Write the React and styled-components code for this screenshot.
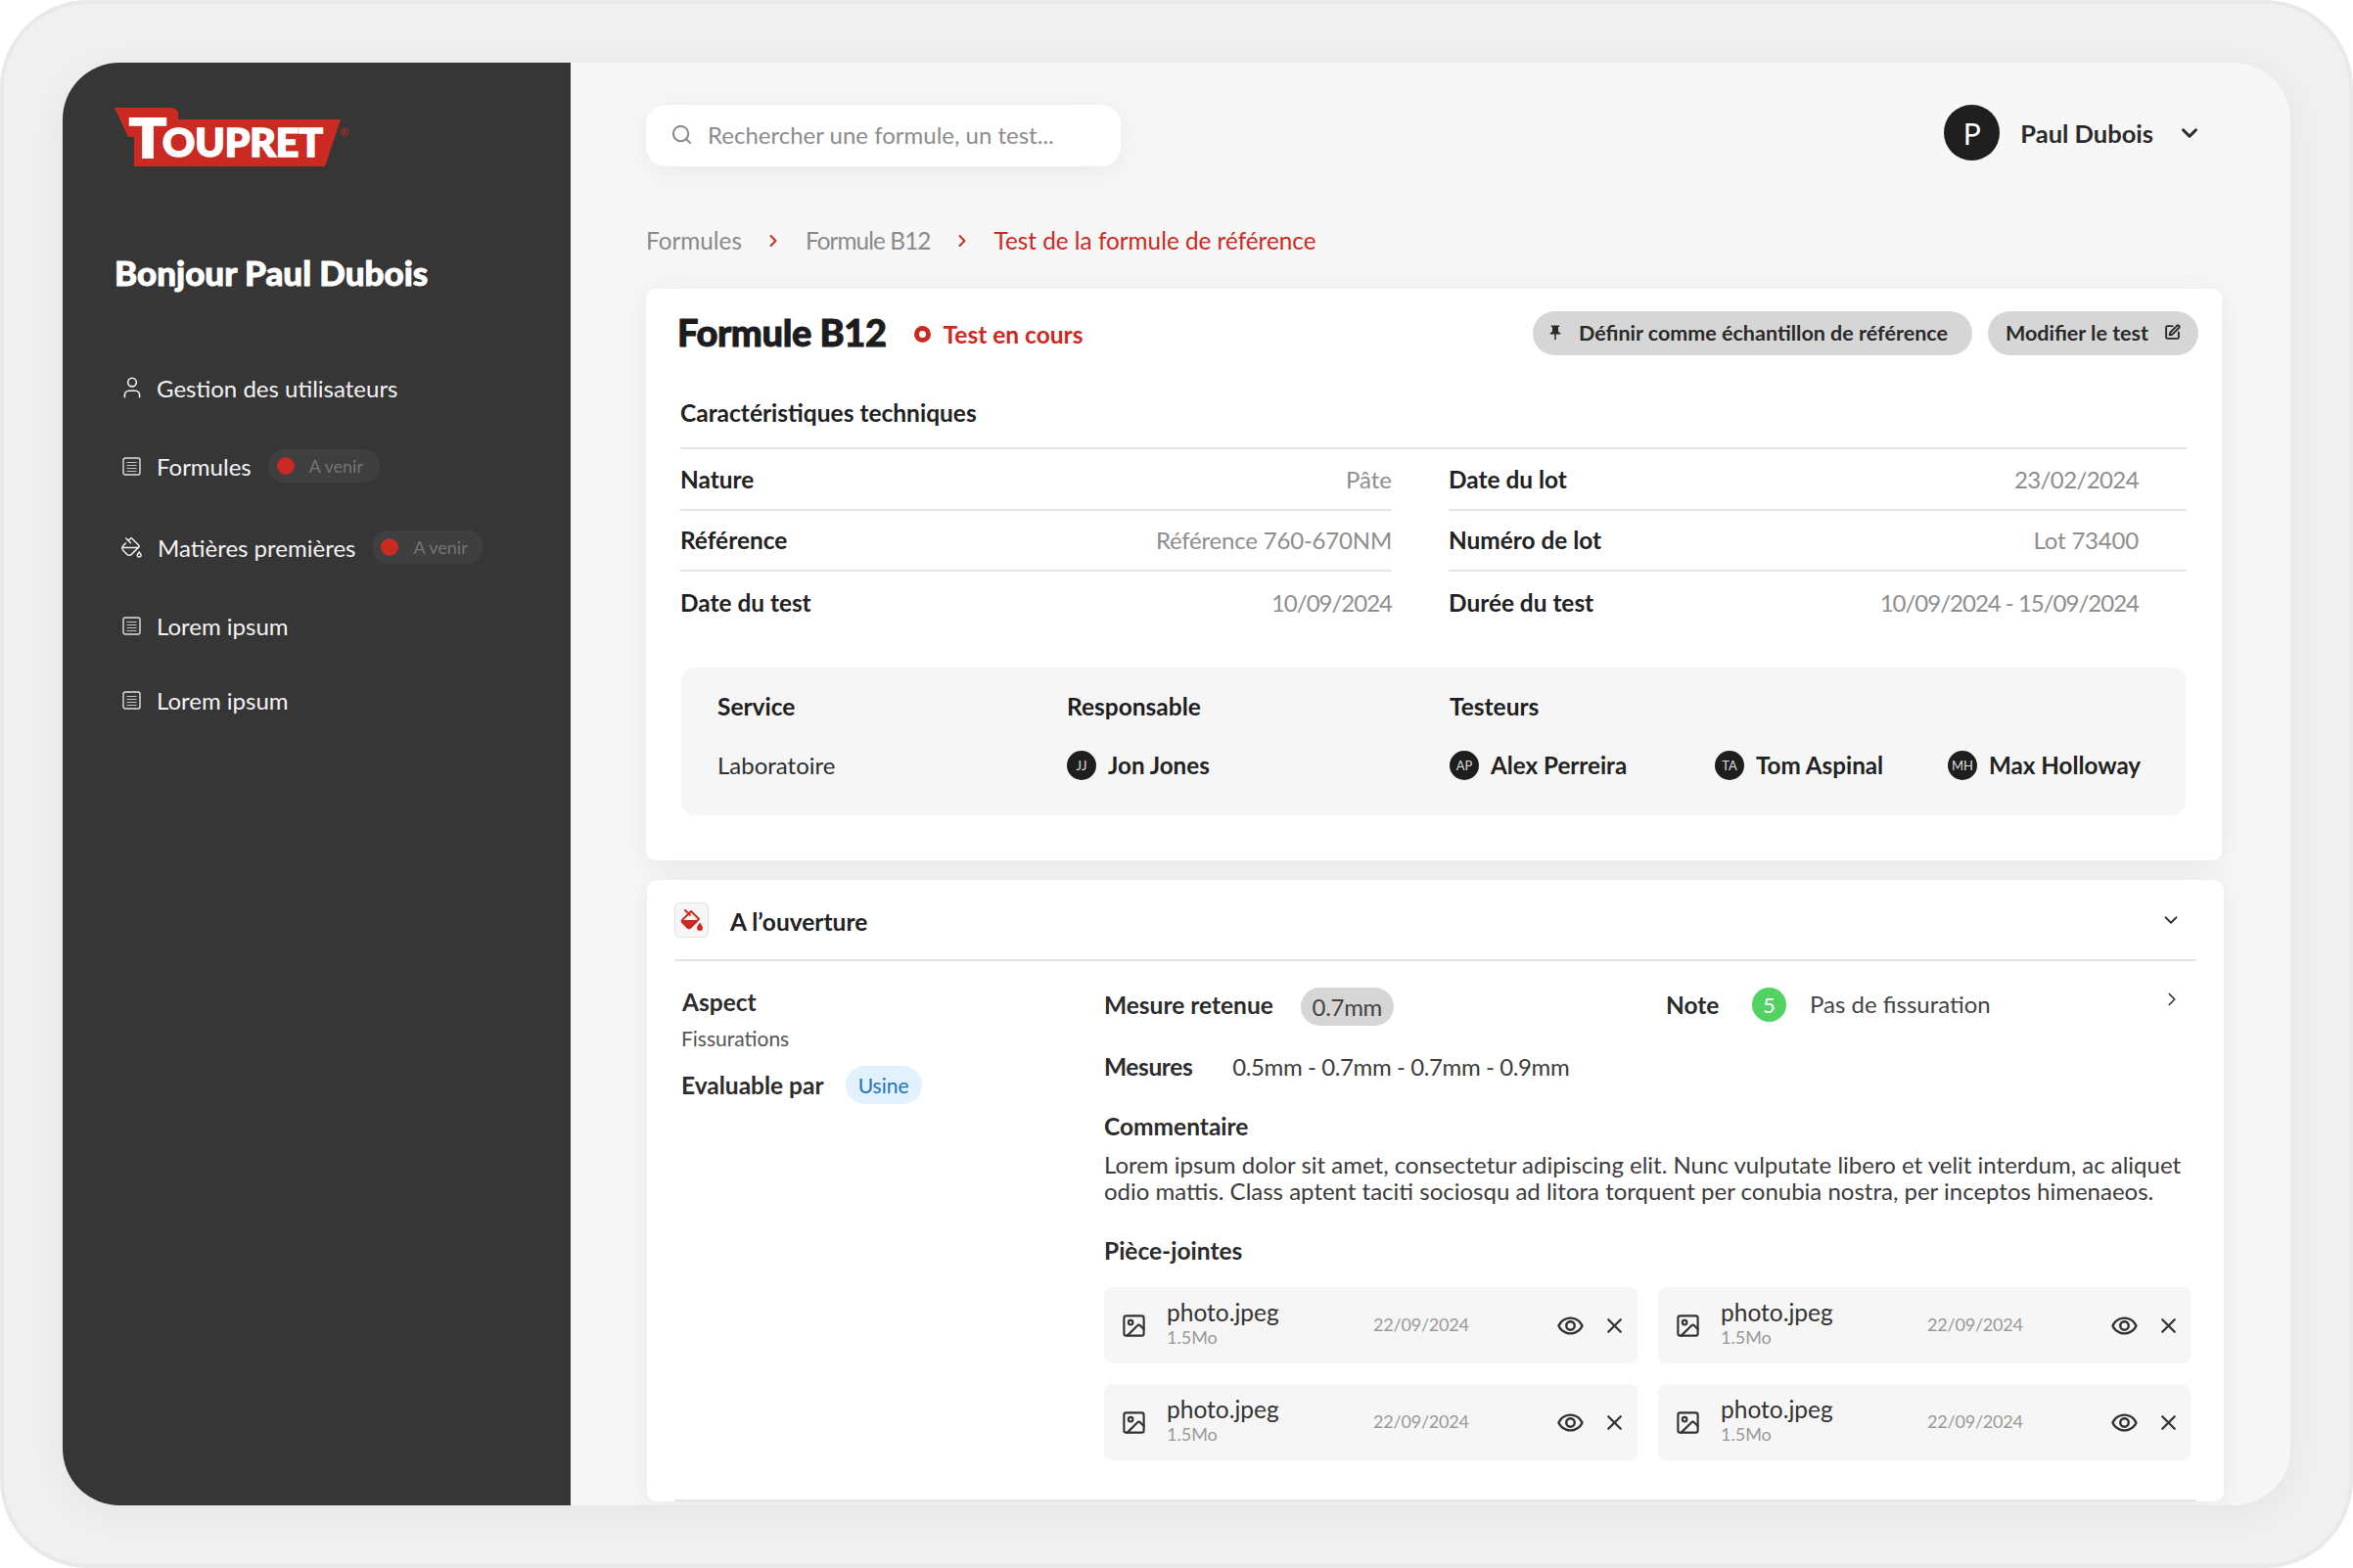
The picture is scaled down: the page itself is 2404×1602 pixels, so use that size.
import React from 'react';
import styled, { createGlobalStyle } from 'styled-components';
import { ChevronDown, ChevronRight, Image as ImageIcon, PaintBucket, Search, SquarePen, User, X } from 'lucide-react';
import { MdOutlineRemoveRedEye, MdPushPin } from 'react-icons/md';

const RED = '#cb2a23';
const FONT = '"Lato", "Open Sans", sans-serif';

const GlobalStyle = createGlobalStyle`
  html, body { margin: 0; padding: 0; background: #fff; }
  body { font-family: ${FONT}; color: #2e2e2e; }
  * { box-sizing: border-box; }
`;

const Device = styled.div`
  width: 2404px;
  height: 1602px;
  padding: 60px;
  padding-right: 60px;
  background: #f0f0f0;
  border: 4px solid #e9e9e9;
  border-radius: 90px;
`;

const Screen = styled.div`
  display: flex;
  height: 1474px;
  width: 2276px;
  overflow: hidden;
  border-radius: 58px;
  background: #f7f7f7;
  box-shadow: 0 8px 40px rgba(0, 0, 0, 0.05);
`;

const Sidebar = styled.aside`
  flex: 0 0 519px;
  background: #363636;
  padding: 46px 0 0 53px;
  color: #f2f2f2;
`;

const LogoMark = styled.svg`
  display: block;
  overflow: visible;
`;

const Greeting = styled.h1`
  margin: 86px 0 81px;
  font-size: 35px;
  line-height: 40px;
  font-weight: 900;
  color: #fff;
  -webkit-text-stroke: 0.9px #fff;
`;

const NavItem = styled.div`
  display: flex;
  align-items: center;
  height: 34px;
  margin-top: ${(p) => p.$top || 0}px;
  margin-left: ${(p) => p.$indent || 8}px;
  font-size: 24px;
  svg { flex: none; }
`;

const NavLabel = styled.span`
  margin-left: ${(p) => p.$gap}px;
  margin-right: 17px;
`;

const SoonPill = styled.span`
  display: flex;
  align-items: center;
  width: 114px;
  height: 34px;
  padding-left: 9px;
  border-radius: 17px;
  background: #3f3f3f;
  color: #747474;
  font-size: 18px;
  &::before {
    content: '';
    width: 18px;
    height: 18px;
    margin-right: 15px;
    border-radius: 50%;
    background: ${RED};
  }
`;

const Main = styled.main`
  flex: 1;
  min-width: 0;
  padding: 43px 68px 0 77px;
`;

const TopBar = styled.header`
  display: flex;
  align-items: center;
  justify-content: space-between;
  height: 63px;
  padding-right: 22px;
`;

const SearchBox = styled.div`
  display: flex;
  align-items: center;
  gap: 15px;
  width: 485px;
  height: 63px;
  padding: 0 0 2px 25px;
  border-radius: 20px;
  background: #fff;
  box-shadow: 0 6px 30px rgba(0, 0, 0, 0.06);
  color: #8c8c8c;
  font-size: 24px;
`;

const UserMenu = styled.div`
  display: flex;
  align-items: center;
  margin-top: -6px;
  font-size: 25.5px;
  font-weight: 700;
  color: #2b2b2b;
`;

const UserAvatar = styled.div`
  display: flex;
  align-items: center;
  justify-content: center;
  width: 57px;
  height: 57px;
  margin-right: 21px;
  border-radius: 50%;
  background: #1e1e1e;
  color: #fff;
  font-size: 30px;
  font-weight: 400;
`;

const Crumbs = styled.nav`
  display: flex;
  align-items: center;
  height: 30px;
  margin: 60px 0 35px;
  font-size: 24.3px;
  color: #8a8a8a;
`;

const Crumb = styled.span`
  letter-spacing: ${(p) => p.$tight || 0}px;
  color: ${(p) => (p.$active ? RED : 'inherit')};
`;

const CrumbArrow = styled(ChevronRight)`
  margin: 2px 23px 0 22px;
  color: ${RED};
`;

const Card = styled.section`
  width: ${(p) => p.$width}px;
  margin-left: ${(p) => p.$left || 0}px;
  background: #fff;
  border-radius: 10px;
  box-shadow: 0 4px 30px rgba(0, 0, 0, 0.07);
`;

const SummaryCard = styled(Card)`
  height: 584px;
  padding: 23px 24px 0 32px;
  margin-bottom: 20px;
`;

const TitleRow = styled.div`
  display: flex;
  align-items: center;
  height: 45px;
`;

const Title = styled.h2`
  margin: -3px 28px 0 0;
  font-size: 38px;
  letter-spacing: -0.4px;
  font-weight: 900;
  color: #1c1c1c;
  -webkit-text-stroke: 0.9px #1c1c1c;
`;

const Status = styled.span`
  display: flex;
  align-items: center;
  flex: 1;
  margin-top: 1px;
  font-size: 24.5px;
  font-weight: 700;
  color: ${RED};
  &::before {
    content: '';
    width: 7px;
    height: 7px;
    margin-right: 13px;
    border: 5px solid ${RED};
    border-radius: 50%;
  }
`;

const PillButton = styled.button`
  display: flex;
  align-items: center;
  height: 45px;
  margin-left: 16px;
  padding: ${(p) => p.$padding};
  padding-bottom: 2px;
  border: 0;
  border-radius: 23px;
  background: #d6d6d6;
  color: #2a2a2a;
  font-family: inherit;
  font-size: 21.5px;
  font-weight: 700;
`;

const SectionTitle = styled.h3`
  margin: 44px 0 20px 3px;
  height: 30px;
  font-size: 24.5px;
  line-height: 30px;
  font-weight: 700;
  color: #222;
`;

const SpecGrid = styled.div`
  display: grid;
  grid-template-columns: 727px 754px;
  column-gap: 58px;
  width: 1539px;
  margin-left: 3px;
  border-top: 2px solid #e4e4e4;
`;

const SpecRow = styled.div`
  display: flex;
  align-items: center;
  justify-content: space-between;
  height: 62.5px;
  padding-right: ${(p) => p.$pad || 0}px;
  font-size: 24.4px;
  border-bottom: ${(p) => (p.$last ? 'none' : '2px solid #e6e6e6')};
`;

const SpecLabel = styled.span`
  font-weight: 700;
  color: #222;
`;

const SpecValue = styled.span`
  font-size: 24px;
  letter-spacing: ${(p) => p.$tight || 0}px;
  color: #8e8e8e;
`;

const PeopleBox = styled.div`
  display: grid;
  grid-template-columns: 357px 391px 1fr;
  grid-template-rows: 60px 60px;
  align-items: center;
  width: 1537px;
  height: 151px;
  margin: 35px 0 0 4px;
  padding: 10px 0 0 37px;
  border-radius: 14px;
  background: #f6f6f6;
  font-size: 24px;
`;

const PeopleHead = styled.span`
  font-size: 24.5px;
  font-weight: 700;
  color: #1e1e1e;
`;

const Person = styled.span`
  display: flex;
  align-items: center;
  gap: 12px;
  width: ${(p) => p.$width || 'auto'};
  flex: none;
  font-size: 24.2px;
  font-weight: 700;
  color: #222;
`;

const Initials = styled.span`
  display: flex;
  align-items: center;
  justify-content: center;
  width: 30px;
  height: 30px;
  border-radius: 50%;
  background: #1e1e1e;
  color: #ddd;
  font-size: 13px;
  font-weight: 400;
`;

const Testers = styled.div`
  display: flex;
`;

const DetailCard = styled(Card)`
  padding: 0 28px;
`;

const DetailHeader = styled.div`
  display: flex;
  align-items: center;
  height: 83px;
  border-bottom: 2px solid #e4e4e4;
  font-size: 24.5px;
  font-weight: 700;
  color: #222;
`;

const IconTile = styled.span`
  display: flex;
  align-items: center;
  justify-content: center;
  width: 35px;
  height: 36px;
  margin-right: 22px;
  border: 1px solid #e3e3e3;
  border-radius: 5px;
  background: #f6f6f6;
  color: ${RED};
`;

const DetailTitle = styled.span`
  flex: 1;
  padding-top: 3px;
`;

const DetailBody = styled.div`
  display: grid;
  grid-template-columns: 439px 1110px;
  padding: 27px 0 40px;
  border-bottom: 2px solid #e4e4e4;
`;

const AspectColumn = styled.div`
  padding-left: 8px;
`;

const Strong = styled.div`
  font-size: 24.5px;
  line-height: 30px;
  font-weight: 700;
  color: #2c2c2c;
`;

const Small = styled.div`
  margin: 9px 0 0 -1px;
  font-size: 21px;
  line-height: 26px;
  color: #555;
`;

const EvalRow = styled.div`
  display: flex;
  align-items: center;
  gap: 22px;
  margin: 15px 0 0 -1px;
`;

const UsinePill = styled.span`
  display: flex;
  align-items: center;
  justify-content: center;
  width: 78px;
  height: 39px;
  border-radius: 20px;
  background: #e1f1fd;
  color: #1b75b8;
  font-size: 21px;
`;

const MeasureRow = styled.div`
  display: flex;
  align-items: center;
  height: 39px;
  font-size: 24px;
`;

const MeasureBlock = styled.div`
  display: flex;
  align-items: center;
  gap: 28px;
  width: 574px;
`;

const MeasureLabel = styled(Strong)`
  margin-top: -3px;
`;

const ValuePill = styled.span`
  display: flex;
  align-items: center;
  justify-content: center;
  width: 95px;
  height: 39px;
  border-radius: 20px;
  background: #d6d6d6;
  letter-spacing: -0.3px;
  color: #444;
`;

const NoteLabel = styled(Strong)`
  width: 88px;
  margin-top: -4px;
`;

const NoteDot = styled.span`
  display: flex;
  align-items: center;
  justify-content: center;
  width: 35px;
  height: 35px;
  margin: -4px 24px 0 0;
  border-radius: 50%;
  background: #51d263;
  color: #fff;
  font-size: 22px;
`;

const NoteText = styled.span`
  flex: 1;
  margin-top: -6px;
  color: #444;
`;

const NoteChevron = styled(ChevronRight)`
  margin: -16px 8px 0 0;
  color: #333;
`;

const MeasuresLine = styled.div`
  display: flex;
  gap: 41px;
  margin-top: 27px;
  font-size: 24px;
  line-height: 30px;
  letter-spacing: -0.4px;
  color: #3c3c3c;
`;

const SubHead = styled(Strong)`
  margin-top: ${(p) => p.$top}px;
`;

const Comment = styled.p`
  margin: 10px 0 0;
  font-size: 24px;
  line-height: 27px;
  color: #3c3c3c;
`;

const Files = styled.div`
  display: grid;
  grid-template-columns: 545px 544px;
  grid-auto-rows: 78px;
  gap: 21px;
  margin-top: 22px;
`;

const FileRow = styled.div`
  display: grid;
  grid-template-columns: 64px 211px 187px 47px 30px;
  align-items: center;
  border-radius: 8px;
  background: #f6f6f6;
  color: #333;
`;

const FileIcon = styled.span`
  display: flex;
  justify-content: center;
  padding-right: 3px;
`;

const FileName = styled.div`
  margin-top: -4px;
  font-size: 24.5px;
  line-height: 26px;
`;

const FileSize = styled.div`
  margin-top: 1px;
  font-size: 18px;
  line-height: 22px;
  color: #999;
`;

const FileDate = styled.span`
  margin-top: -2px;
  font-size: 18px;
  letter-spacing: -0.2px;
  color: #999;
`;

const Logo = () => (
  <LogoMark width="240" height="62" viewBox="0 0 240 62">
    <path fill={RED} d="M0 0H55Q62 0 65 4V12H231L215 60H20V30H14Z" />
    <text x="15" y="51" fill="#fff" stroke="#fff" strokeWidth="2" fontFamily="Lato" fontWeight="900" fontSize="56" textLength="38" lengthAdjust="spacingAndGlyphs">T</text>
    <text x="49" y="49.5" fill="#fff" stroke="#fff" strokeWidth="1.6" fontFamily="Lato" fontWeight="900" fontSize="39" textLength="164" lengthAdjust="spacingAndGlyphs">OUPRET</text>
    <text x="230" y="29" fill={RED} fontFamily="Lato" fontSize="12">®</text>
  </LogoMark>
);

const DocIcon = () => (
  <svg width="19" height="19" viewBox="0 0 19 19" fill="none" stroke="currentColor" strokeWidth="1.2" strokeOpacity="0.9">
    <rect x="1" y="1" width="17" height="17" rx="2" strokeWidth="1.4" />
    <path d="M4.5 5.5h10M4.5 8.5h10M4.5 11.5h10M4.5 14.5h10" strokeOpacity="0.75" />
  </svg>
);

const FilledBucket = () => (
  <svg width="24" height="26" viewBox="0 0 24 24" fill="none" stroke={RED} strokeWidth="2" strokeLinecap="round" strokeLinejoin="round">
    <path d="m19 11-8-8-8.6 8.6a2 2 0 0 0 0 2.8l5.2 5.2c.8.8 2 .8 2.8 0L19 11Z" />
    <path d="m5 2 5 5" />
    <path d="M2.4 13H17l-6.6 6.6c-.8.8-2 .8-2.8 0l-5.2-5.2Z" fill={RED} />
    <path d="M22 20a2 2 0 1 1-4 0c0-1.6 1.7-2.4 2-4 .3 1.6 2 2.4 2 4Z" fill={RED} />
  </svg>
);

const attachments = [0, 1, 2, 3];

export default function App() {
  return (
    <>
      <GlobalStyle />
      <Device>
        <Screen>
          <Sidebar>
            <Logo />
            <Greeting>Bonjour Paul Dubois</Greeting>
            <NavItem $indent={5}>
              <User size={26} strokeWidth={1.5} />
              <NavLabel $gap={12}>Gestion des utilisateurs</NavLabel>
            </NavItem>
            <NavItem $top={46}>
              <DocIcon />
              <NavLabel $gap={16}>Formules</NavLabel>
              <SoonPill>A venir</SoonPill>
            </NavItem>
            <NavItem $top={49} $indent={6}>
              <PaintBucket size={23} strokeWidth={1.5} />
              <NavLabel $gap={15}>Matières premières</NavLabel>
              <SoonPill>A venir</SoonPill>
            </NavItem>
            <NavItem $top={46}>
              <DocIcon />
              <NavLabel $gap={16}>Lorem ipsum</NavLabel>
            </NavItem>
            <NavItem $top={42}>
              <DocIcon />
              <NavLabel $gap={16}>Lorem ipsum</NavLabel>
            </NavItem>
          </Sidebar>
          <Main>
            <TopBar>
              <SearchBox>
                <Search size={23} strokeWidth={2.2} />
                Rechercher une formule, un test...
              </SearchBox>
              <UserMenu>
                <UserAvatar>P</UserAvatar>
                Paul Dubois
                <ChevronDown size={26} strokeWidth={2.8} style={{ marginLeft: 24 }} />
              </UserMenu>
            </TopBar>
            <Crumbs>
              <Crumb>Formules</Crumb>
              <CrumbArrow size={20} strokeWidth={2.4} />
              <Crumb $tight={-0.9}>Formule B12</Crumb>
              <CrumbArrow size={20} strokeWidth={2.4} />
              <Crumb $active>Test de la formule de référence</Crumb>
            </Crumbs>
            <SummaryCard $width={1610}>
              <TitleRow>
                <Title>Formule B12</Title>
                <Status>Test en cours</Status>
                <PillButton $padding="0 25px 0 14px">
                  <MdPushPin size={18} style={{ marginRight: 15 }} />
                  Définir comme échantillon de référence
                </PillButton>
                <PillButton $padding="0 18px">
                  Modifier le test
                  <SquarePen size={17} strokeWidth={2.7} style={{ marginLeft: 16 }} />
                </PillButton>
              </TitleRow>
              <SectionTitle>Caractéristiques techniques</SectionTitle>
              <SpecGrid>
                <div>
                  <SpecRow><SpecLabel>Nature</SpecLabel><SpecValue>Pâte</SpecValue></SpecRow>
                  <SpecRow><SpecLabel>Référence</SpecLabel><SpecValue $tight={-0.2}>Référence 760-670NM</SpecValue></SpecRow>
                  <SpecRow $last><SpecLabel>Date du test</SpecLabel><SpecValue $tight={-1}>10/09/2024</SpecValue></SpecRow>
                </div>
                <div>
                  <SpecRow $pad={49}><SpecLabel>Date du lot</SpecLabel><SpecValue $tight={-0.6}>23/02/2024</SpecValue></SpecRow>
                  <SpecRow $pad={49}><SpecLabel>Numéro de lot</SpecLabel><SpecValue $tight={-0.2}>Lot 73400</SpecValue></SpecRow>
                  <SpecRow $pad={49} $last><SpecLabel>Durée du test</SpecLabel><SpecValue $tight={-1}>10/09/2024 - 15/09/2024</SpecValue></SpecRow>
                </div>
              </SpecGrid>
              <PeopleBox>
                <PeopleHead>Service</PeopleHead>
                <PeopleHead>Responsable</PeopleHead>
                <PeopleHead>Testeurs</PeopleHead>
                <span>Laboratoire</span>
                <Person><Initials>JJ</Initials>Jon Jones</Person>
                <Testers>
                  <Person $width="271px"><Initials>AP</Initials>Alex Perreira</Person>
                  <Person $width="238px"><Initials>TA</Initials>Tom Aspinal</Person>
                  <Person><Initials>MH</Initials>Max Holloway</Person>
                </Testers>
              </PeopleBox>
            </SummaryCard>
            <DetailCard $width={1611} $left={1}>
              <DetailHeader>
                <IconTile><FilledBucket /></IconTile>
                <DetailTitle>A l’ouverture</DetailTitle>
                <ChevronDown size={22} strokeWidth={2} style={{ color: '#333', marginRight: 15 }} />
              </DetailHeader>
              <DetailBody>
                <AspectColumn>
                  <Strong>Aspect</Strong>
                  <Small>Fissurations</Small>
                  <EvalRow>
                    <Strong>Evaluable par</Strong>
                    <UsinePill>Usine</UsinePill>
                  </EvalRow>
                </AspectColumn>
                <div>
                  <MeasureRow>
                    <MeasureBlock>
                      <MeasureLabel>Mesure retenue</MeasureLabel>
                      <ValuePill>0.7mm</ValuePill>
                    </MeasureBlock>
                    <NoteLabel>Note</NoteLabel>
                    <NoteDot>5</NoteDot>
                    <NoteText>Pas de fissuration</NoteText>
                    <NoteChevron size={22} strokeWidth={1.8} />
                  </MeasureRow>
                  <MeasuresLine>
                    <Strong>Mesures</Strong>
                    0.5mm - 0.7mm - 0.7mm - 0.9mm
                  </MeasuresLine>
                  <SubHead $top={31}>Commentaire</SubHead>
                  <Comment>
                    Lorem ipsum dolor sit amet, consectetur adipiscing elit. Nunc vulputate libero et velit interdum, ac aliquet
                    <br />
                    odio mattis. Class aptent taciti sociosqu ad litora torquent per conubia nostra, per inceptos himenaeos.
                  </Comment>
                  <SubHead $top={33}>Pièce-jointes</SubHead>
                  <Files>
                    {attachments.map((id) => (
                      <FileRow key={id}>
                        <FileIcon><ImageIcon size={27} strokeWidth={1.9} /></FileIcon>
                        <div>
                          <FileName>photo.jpeg</FileName>
                          <FileSize>1.5Mo</FileSize>
                        </div>
                        <FileDate>22/09/2024</FileDate>
                        <MdOutlineRemoveRedEye size={29} />
                        <X size={25} strokeWidth={2.2} />
                      </FileRow>
                    ))}
                  </Files>
                </div>
              </DetailBody>
            </DetailCard>
          </Main>
        </Screen>
      </Device>
    </>
  );
}
